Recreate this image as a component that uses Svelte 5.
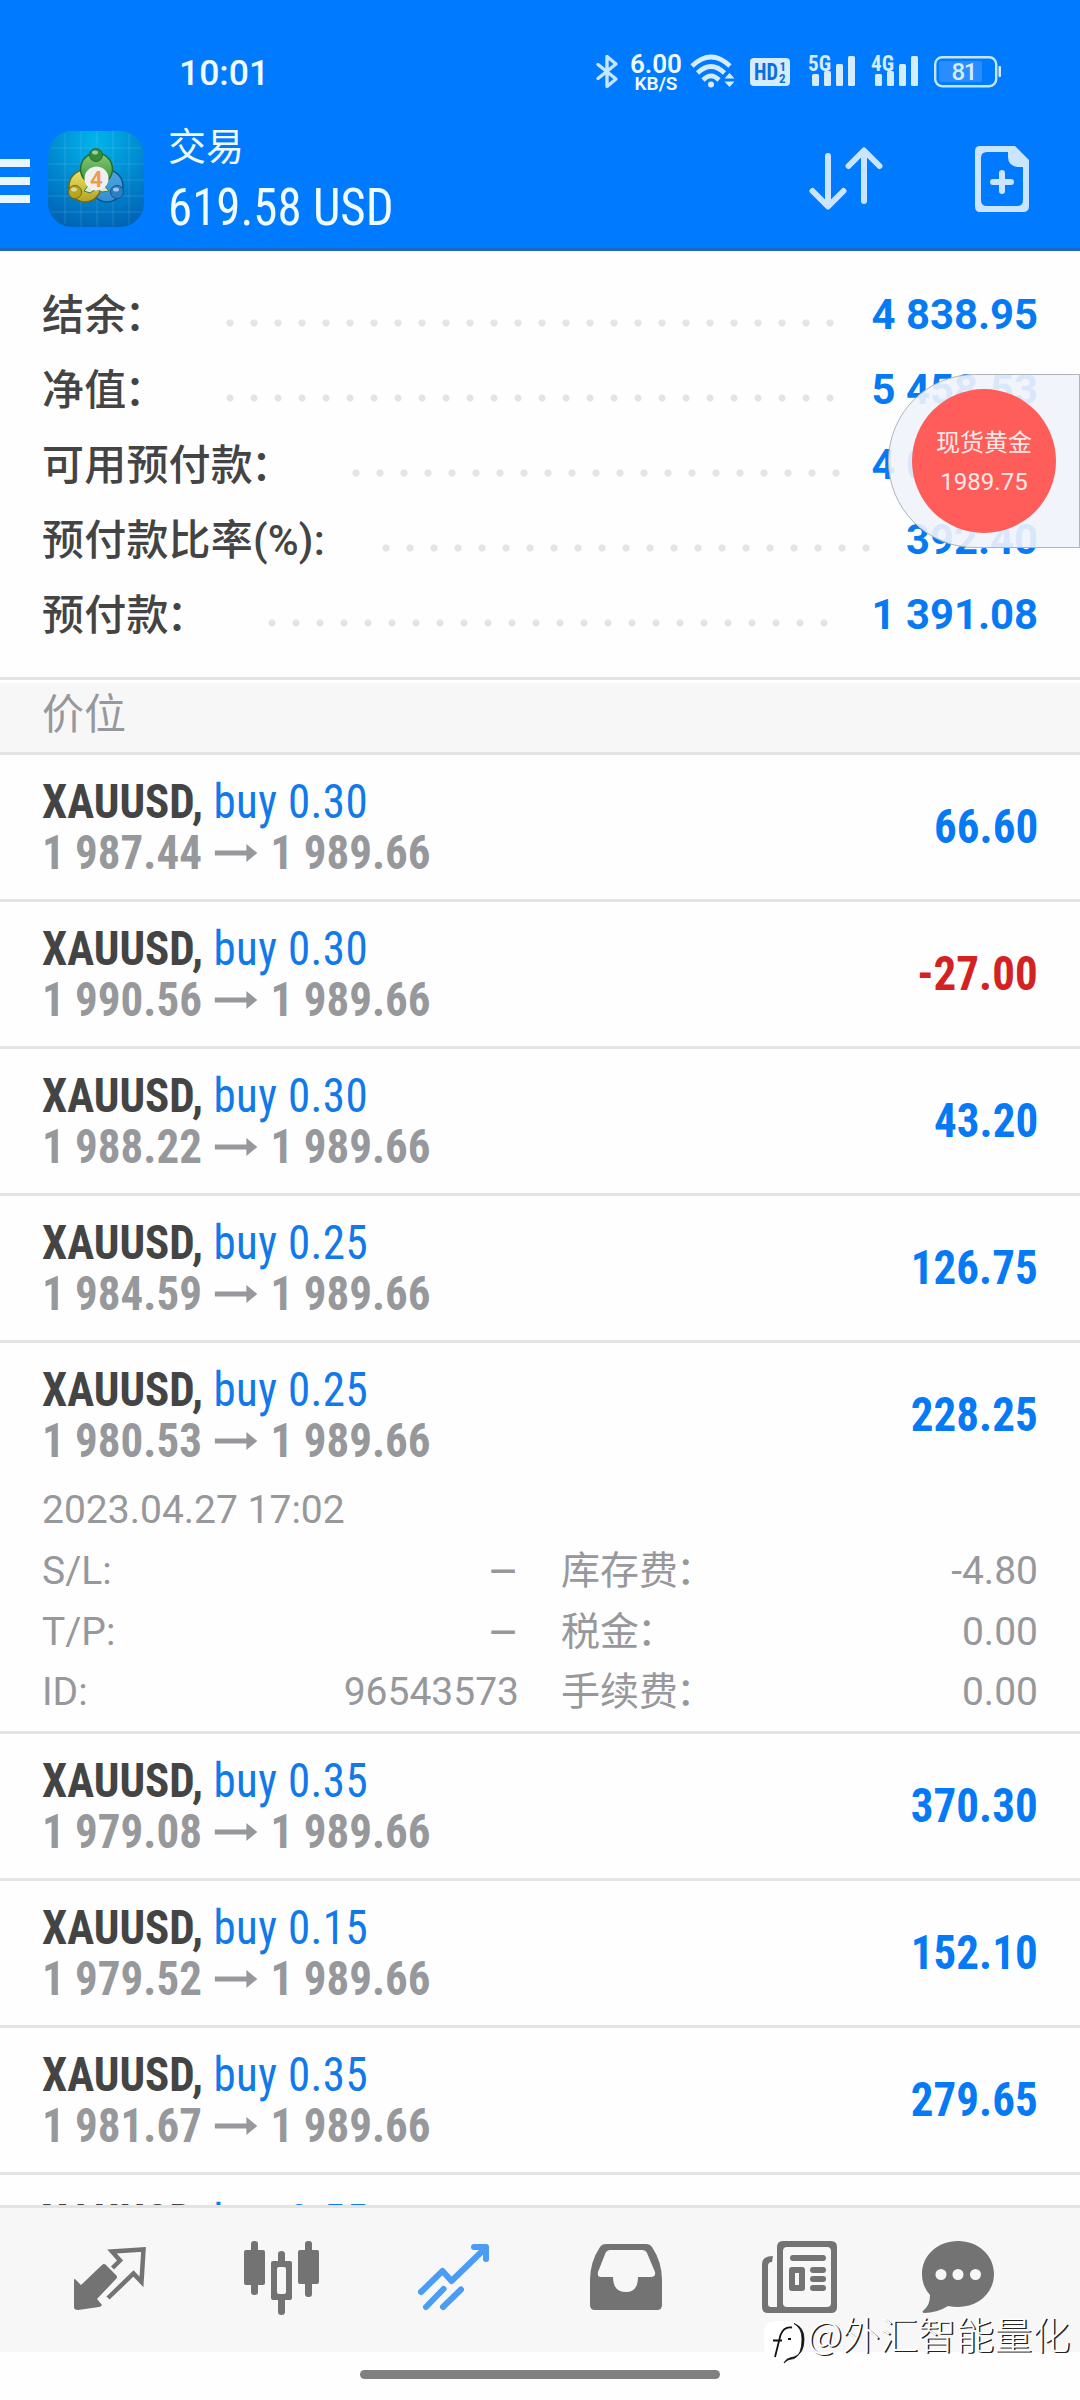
<script lang="ts">
  interface Balance {
    label: string;
    colon: string;
    value: string;
    dots: number;
  }

  interface Position {
    id: number;
    symbol: string;
    volume: string;
    open: string;
    current: string;
    profit: string;
    expanded?: boolean;
  }

  const balances: Balance[] = [
    { label: "结余", colon: "：", value: "4 838.95", dots: 26 },
    { label: "净值", colon: "：", value: "5 458.53", dots: 26 },
    { label: "可用预付款", colon: "：", value: "4 067.45", dots: 21 },
    { label: "预付款比率(%)", colon: ":", value: "392.40", dots: 21 },
    { label: "预付款", colon: "：", value: "1 391.08", dots: 24 },
  ];

  const positions: Position[] = [
    { id: 1, symbol: "XAUUSD", volume: "0.30", open: "1 987.44", current: "1 989.66", profit: "66.60" },
    { id: 2, symbol: "XAUUSD", volume: "0.30", open: "1 990.56", current: "1 989.66", profit: "-27.00" },
    { id: 3, symbol: "XAUUSD", volume: "0.30", open: "1 988.22", current: "1 989.66", profit: "43.20" },
    { id: 4, symbol: "XAUUSD", volume: "0.25", open: "1 984.59", current: "1 989.66", profit: "126.75" },
    { id: 5, symbol: "XAUUSD", volume: "0.25", open: "1 980.53", current: "1 989.66", profit: "228.25", expanded: true },
    { id: 6, symbol: "XAUUSD", volume: "0.35", open: "1 979.08", current: "1 989.66", profit: "370.30" },
    { id: 7, symbol: "XAUUSD", volume: "0.15", open: "1 979.52", current: "1 989.66", profit: "152.10" },
    { id: 8, symbol: "XAUUSD", volume: "0.35", open: "1 981.67", current: "1 989.66", profit: "279.65" },
  ];

  const details = [
    ["S/L:", "–", "库存费", "-4.80"],
    ["T/P:", "–", "税金", "0.00"],
    ["ID:", "96543573", "手续费", "0.00"],
  ];
</script>

{#snippet signal(kind: string)}
  <svg class="signal" width="48" height="36" viewBox="0 0 48 36">
    <text x="0" y="17.500" font-size="22" font-weight="700" textLength="23" lengthAdjust="spacingAndGlyphs">{kind}</text>
    <rect x="4" y="21" width="7" height="12" rx="1.5" />
    <rect x="16" y="18" width="7" height="15" rx="1.5" />
    <rect x="28" y="11" width="7" height="22" rx="1.5" />
    <rect x="40" y="3" width="7" height="30" rx="1.5" />
  </svg>
{/snippet}

<div class="screen">
  <header>
    <div class="status">
      <span class="clock">10:01</span>
      <svg class="bt" width="24" height="36" viewBox="0 0 24 36">
        <path d="M3 11.500L21 26L12 33.500V3.500L21 11L3 25.500" />
      </svg>
      <div class="speed">
        <b>6.00</b>
        <span>KB/S</span>
      </div>
      <svg class="wifi" width="46" height="36" viewBox="0 0 46 36">
        <g fill="none" stroke="#d5ecff" stroke-width="4.6">
          <path d="M2 13 Q21 -5 40 13" />
          <path d="M7.500 20 Q21 7 34.500 20" />
          <path d="M13 27 Q21 19 29 27" />
        </g>
        <circle cx="21" cy="31.500" r="3" />
        <path d="M34.500 25.500 L39.500 20 L44.500 25.500 Z M34.500 28.500 L39.500 34 L44.500 28.500 Z" />
      </svg>
      <svg class="hd" width="40" height="28" viewBox="0 0 40 28">
        <rect width="40" height="28" rx="4" />
        <g fill="#0a6fe0" font-weight="700">
          <text x="4" y="22" font-size="23" textLength="24" lengthAdjust="spacingAndGlyphs">HD</text>
          <text x="29.500" y="12.500" font-size="13">1</text>
          <text x="29" y="25" font-size="13">2</text>
        </g>
      </svg>
      {@render signal("5G")}
      {@render signal("4G")}
      <svg class="battery" width="68" height="32" viewBox="0 0 68 32">
        <rect x="1.200" y="1.200" width="61" height="29" rx="7" fill="none" stroke="#c4e6ff" stroke-width="2.400" />
        <rect x="5" y="5" width="43" height="21" rx="2" fill="#2a8dff" />
        <rect x="64.500" y="10" width="2.500" height="11" rx="1" />
        <text x="17.500" y="24" font-size="24" font-weight="500" textLength="26">81</text>
      </svg>
    </div>
    <div class="toolbar">
      <div class="burger"><i></i><i></i><i></i></div>
      <svg class="logo" width="96" height="96" viewBox="0 0 96 96">
        <defs>
          <radialGradient id="bg" cx="0.5" cy="0.1" r="0.95">
            <stop offset="0" stop-color="#00b4ea" />
            <stop offset="0.55" stop-color="#0087cf" />
            <stop offset="1" stop-color="#0062b4" />
          </radialGradient>
          <linearGradient id="green" x2="0" y2="1">
            <stop offset="0" stop-color="#8ccb72" />
            <stop offset="1" stop-color="#2f8a38" />
          </linearGradient>
          <linearGradient id="yellow" x2="0" y2="1">
            <stop offset="0" stop-color="#ece66a" />
            <stop offset="1" stop-color="#b5a120" />
          </linearGradient>
          <linearGradient id="blue" x2="0" y2="1">
            <stop offset="0" stop-color="#4fa6dd" />
            <stop offset="1" stop-color="#2f8fd6" />
          </linearGradient>
        </defs>
        <rect width="96" height="96" rx="24" fill="url(#bg)" />
        <path class="grid" d="M17 3V93M33 0V96M49 0V96M65 0V96M81 3V93M3 17H93M0 33H96M0 49H96M0 65H96M3 81H93" />
        <circle cx="59" cy="55" r="16" fill="url(#blue)" stroke="#125190" stroke-width="1.500" />
        <circle cx="37" cy="55" r="16" fill="url(#yellow)" stroke="#75680f" stroke-width="1.500" />
        <circle cx="48.500" cy="38" r="16" fill="url(#green)" stroke="#1c6e35" stroke-width="1.500" />
        <path d="M36 60L42 52L54 52L61 60L54 61L48 58L42 62Z" fill="#d9ecc8" stroke="#3d7a4a" />
        <circle cx="48" cy="24" r="6.500" fill="#358c3a" stroke="#1c6e35" />
        <circle cx="27" cy="61" r="6.500" fill="#b9a51f" stroke="#75680f" />
        <circle cx="69" cy="61" r="6.500" fill="#2a7fc4" stroke="#125190" />
        <g fill="#fff" fill-opacity="0.55">
          <ellipse cx="47" cy="21.500" rx="3" ry="2" />
          <ellipse cx="26" cy="58.500" rx="3" ry="2" />
          <ellipse cx="68" cy="58.500" rx="3" ry="2" />
        </g>
        <circle cx="48.500" cy="47.500" r="12" fill="#f1f0f0" />
        <text x="42" y="55.500" font-size="22" font-weight="700" fill="#f19a4e">4</text>
      </svg>
      <div class="title">
        <div class="name">交易</div>
        <div class="total">619.58 USD</div>
      </div>
      <svg class="sort" width="74" height="66" viewBox="0 0 74 66">
        <path d="M19 10V60M3.500 45L19 60.500L34.500 45M55 55V5M39.500 20L55 4.500L70.500 20" />
      </svg>
      <svg class="new" width="56" height="68" viewBox="0 0 56 68">
        <path d="M6 1H41L55 15V61Q55 67 49 67H6Q1 67 1 61V6Q1 1 6 1ZM13 7Q7 7 7 13V55Q7 61 13 61H43Q49 61 49 55V22H43Q34 20 34 12V7Z" />
        <path d="M28 28V46M19 37H37" fill="none" stroke="#cbe4ff" stroke-width="6" stroke-linecap="round" />
      </svg>
    </div>
  </header>

  <section class="balances">
    {#each balances as row (row.label)}
      <div class="balance">
        <span class="label">{row.label}<span class:colon={row.colon === "："}>{row.colon}</span></span>
        <span class="dots" style="width: {row.dots * 24}px"></span>
        <span class="value">{row.value}</span>
      </div>
    {/each}
  </section>

  <div class="section-title">价位</div>

  {#snippet deal(symbol: string, volume: string)}
    <div><b>{symbol},</b> <span class="side">buy {volume}</span></div>
  {/snippet}

  <main>
    {#each positions as p (p.id)}
      <article>
        <div class="summary">
          <div class="deal">
            {@render deal(p.symbol, p.volume)}
            <div class="prices">
              <span>{p.open}</span>
              <svg width="46" height="18" viewBox="0 0 43 18" preserveAspectRatio="none">
                <path d="M0 6.500H32V0L43 9L32 18V11.500H0Z" />
              </svg>
              <span>{p.current}</span>
            </div>
          </div>
          <div class="profit" class:loss={p.profit.startsWith("-")}>{p.profit}</div>
        </div>
        {#if p.expanded}
          <div class="details">
            <div>2023.04.27 17:02</div>
            {#each details as [k1, v1, k2, v2]}
              <div class="line">
                <span>{k1}</span>
                <span class="num" class:dash={v1 === "–"}>{v1}</span>
                <span class="fee">{k2}<span class="colon">：</span></span>
                <span class="num">{v2}</span>
              </div>
            {/each}
          </div>
        {/if}
      </article>
    {/each}
    <article>
      <div class="summary">
        <div class="deal">{@render deal("XAUUSD", "0.55")}<div>&nbsp;</div></div>
      </div>
    </article>
  </main>

  <nav>
    <svg width="76" height="76" viewBox="0 0 76 76">
      <path d="M0 35.500Q0 33 2 35L7 40L28 20Q30 18 32 20L42 30Q44 32 42 34L23 54L28 60Q27 62 25 62L4 65Q0 65 0 62Z" transform="translate(0 5)" />
      <path d="M38.500 28L46 20.500L38 11.500L69.500 9.500L67.500 42L59.500 33.500L34 58" fill="none" stroke="#737373" stroke-width="4.500" />
    </svg>
    <svg width="76" height="76" viewBox="0 0 76 76">
      <rect x="0" y="10" width="21" height="35" rx="2" />
      <rect x="7" y="1" width="7" height="54" rx="3" />
      <path d="M29 21H46Q48 21 48 23V58Q48 60 46 60H29Q27 60 27 58V23Q27 21 29 21ZM35 27Q33 27 33 29V52Q33 54 35 54H40Q42 54 42 52V29Q42 27 40 27Z" />
      <path d="M34 22V14Q34 11 37.500 11Q41 11 41 14V22ZM34 59H41V72Q41 75 37.500 75Q34 75 34 72Z" />
      <rect x="54" y="10" width="21" height="34" rx="2" />
      <rect x="61" y="1" width="7" height="56" rx="3" />
    </svg>
    <svg class="active" width="76" height="76" viewBox="0 0 76 76">
      <path d="M3 52L24.500 31L33.500 41L68 7.500M56 7H68V19" />
      <path d="M8 67L25.500 49M25 67L43 49.500" />
    </svg>
    <svg width="76" height="76" viewBox="0 0 76 76">
      <path d="M16 4H56Q60 4 62 7Q72 22 72 40V65Q72 70 67 70H5Q0 70 0 65V40Q0 22 10 7Q12 4 16 4ZM20 10Q17 10 15.500 13L8 32Q7 37 11 37H23Q23 52 36 52Q48 52 48 37H61Q66 37 65 32L57 13Q55.500 10 52 10Z" />
    </svg>
    <svg width="76" height="76" viewBox="0 0 76 76">
      <path d="M21 1H69Q75 1 75 7V67Q75 73 69 73H6Q0 73 0 67V24Q0 16 11 16L10 22Q6 22 6 26V64Q6 67 9 67H15V7Q15 1 21 1ZM25 7Q21 7 21 11V63Q21 67 25 67H65Q69 67 69 63V11Q69 7 65 7Z" />
      <rect x="28" y="15" width="36" height="6" rx="3" />
      <path d="M30 27H40Q43 27 43 30V48Q43 51 40 51H30Q27 51 27 48V30Q27 27 30 27ZM33 33V45H37V33Z" />
      <rect x="48" y="27" width="16" height="6" rx="3" />
      <rect x="48" y="36" width="16" height="6" rx="3" />
      <rect x="48" y="45" width="16" height="6" rx="3" />
    </svg>
    <svg width="76" height="76" viewBox="0 0 76 76">
      <path d="M36 1C56 1 72 15 72 34C72 53 56 67 36 67Q31 67 26 66Q15 73 2 73Q-1 72 2 70Q8 65 8 55Q0 46 0 34C0 15 16 1 36 1Z" />
      <g fill="#f7f7f7">
        <circle cx="19" cy="34.500" r="5.500" />
        <circle cx="36" cy="34.500" r="5.500" />
        <circle cx="53.500" cy="34.500" r="5.500" />
      </g>
    </svg>
  </nav>
  <div class="home"><i></i></div>

  <div class="quote">
    <div class="bubble">
      <span>现货黄金</span>
      <span>1989.75</span>
    </div>
  </div>

  <div class="watermark">
    <svg width="42" height="46" viewBox="0 0 42 46">
      <path d="M12 0H28Q39 0 39 13V22Q39 33 30 36Q24 37 20 41L19 36H12Q0 36 0 26V13Q0 0 12 0Z" fill="#fff" />
      <path d="M28 6.500Q20 5 16.500 14L11 36M9 19.500H18M24 18H27" fill="none" stroke="#111" stroke-width="1.800" />
      <path d="M30 2.500Q40 6 40 18Q40 33 30 36Q22 37 20 42Q23 38 30 37.500Q38 34 38 18Q38 7 30 2.500Z" fill="#111" stroke="#111" stroke-width="0.800" />
    </svg>
    <span>@外汇智能量化</span>
  </div>
</div>

<style>
  :global(body) {
    margin: 0;
    background: #fff;
  }
  .screen {
    position: relative;
    display: flex;
    flex-direction: column;
    width: 1080px;
    height: 2400px;
    overflow: hidden;
    background: #fefefe;
    color: #444;
    font-family: Roboto, "Noto Sans CJK SC", sans-serif;
  }

  header {
    box-sizing: border-box;
    height: 251px;
    flex-shrink: 0;
    background: #007aff;
    border-bottom: 3px solid #1a68c0;
    color: #f0fbff;
  }
  .status {
    display: flex;
    align-items: flex-start;
    height: 104px;
    padding: 53px 0 0 179px;
    box-sizing: border-box;
  }
  .status svg {
    fill: #d5ecff;
    flex-shrink: 0;
    overflow: visible;
  }
  .signal text,
  .hd text {
    font-stretch: 75%;
  }
  .clock {
    width: 416px;
    font-size: 35.5px;
    font-weight: 500;
    line-height: 40px;
  }
  .bt path {
    fill: none;
    stroke: #c4e6ff;
    stroke-width: 3.4;
    stroke-linejoin: round;
    stroke-linecap: round;
  }
  .speed {
    display: flex;
    flex-direction: column;
    align-items: center;
    width: 58px;
    margin-left: 8px;
    font-weight: 600;
    font-size: 19px;
    line-height: 17px;
  }
  .speed b {
    font-size: 26px;
    font-weight: 600;
    line-height: 22px;
  }
  .wifi {
    margin-left: 5px;
  }
  .status .hd {
    margin: 5px 18px 0 14px;
  }
  .signal {
    margin-right: 15px;
  }
  .battery {
    margin-top: 3px;
  }

  .toolbar {
    display: flex;
    align-items: flex-start;
    padding-top: 22px;
  }
  .burger {
    display: flex;
    flex-direction: column;
    gap: 10px;
    margin: 33px 18px 0 0;
  }
  .burger i {
    width: 30px;
    height: 8px;
    background: #e9f5ff;
  }
  .logo {
    margin-top: 5px;
  }
  .grid {
    stroke: #fff;
    stroke-opacity: 0.13;
  }
  .title {
    width: 641px;
    margin-left: 24px;
  }
  .name {
    padding-top: 1px;
    font-size: 38px;
    line-height: 40px;
  }
  .total {
    margin-top: 11px;
    font-size: 51.5px;
    font-stretch: 75%;
    line-height: 60px;
    transform: scaleX(0.95);
    transform-origin: left;
  }
  .sort {
    margin-top: 20px;
    fill: none;
    stroke: #cbe4ff;
    stroke-width: 6;
    stroke-linecap: round;
    stroke-linejoin: round;
  }
  .new {
    margin: 19px 0 0 91px;
    fill: #cbe4ff;
    fill-rule: evenodd;
  }

  .balances {
    height: 400px;
    padding: 26px 42px 0 42px;
    flex-shrink: 0;
  }
  .balance {
    display: flex;
    align-items: center;
    height: 75px;
    font-size: 42px;
    font-weight: 500;
  }
  .label {
    margin-top: -7px;
    letter-spacing: 0.2px;
    white-space: nowrap;
  }
  .colon {
    position: relative;
    left: -2px;
  }
  .dots {
    height: 8px;
    margin: 16px 0 0 49px;
    background: radial-gradient(circle, #e4e4e4 3.2px, transparent 4px) 0 0 / 24px 8px repeat-x;
  }
  .value {
    margin-left: auto;
    color: #067af5;
    font-size: 41.8px;
    font-weight: 700;
  }

  .section-title {
    box-sizing: border-box;
    height: 78px;
    flex-shrink: 0;
    padding-left: 42px;
    border-top: 3px solid #e4e4e4;
    border-bottom: 3px solid #e4e4e4;
    background: #f7f7f7;
    box-shadow: inset 0 3px #fefefe;
    color: #97989c;
    font-size: 42px;
    line-height: 69px;
  }

  main {
    flex: 1;
    min-height: 0;
    overflow: hidden;
  }
  article {
    border-bottom: 3px solid #e4e4e4;
  }
  .summary {
    display: flex;
    justify-content: space-between;
    align-items: center;
    height: 144px;
    padding: 0 42px;
  }
  /* the list face is narrower than the condensed cut */
  .deal,
  .profit {
    font-size: 48.5px;
    font-stretch: 75%;
    line-height: 51px;
    white-space: nowrap;
    transform: scaleX(0.928);
  }
  .deal {
    transform-origin: left;
  }
  .side {
    color: #1279ea;
    letter-spacing: 0.4px;
  }
  .prices {
    display: flex;
    align-items: center;
    gap: 14px;
    color: #97989c;
    font-weight: 700;
  }
  .prices svg {
    fill: #97989c;
  }
  .profit {
    margin-top: -1px;
    transform-origin: right;
    color: #067af5;
    font-weight: 700;
  }
  .loss {
    color: #d42222;
  }
  .details {
    display: flow-root;
    height: 251px;
    margin-top: -7px;
    padding: 0 42px;
    color: #97989c;
    font-size: 39px;
    line-height: 61px;
  }
  .line {
    display: grid;
    grid-template-columns: 200px 277px 242px 1fr;
    height: 60.7px;
  }
  .fee {
    padding-left: 42px;
    white-space: nowrap;
  }
  .num {
    text-align: right;
  }
  .dash {
    font-size: 48px;
  }

  nav {
    box-sizing: border-box;
    display: grid;
    grid-template-columns: 170px 174px 172px 172px 160px 76px;
    height: 147px;
    flex-shrink: 0;
    padding: 32px 0 0 74px;
    border-top: 3px solid #e4e4e4;
    background: #f7f7f7;
  }
  nav svg {
    fill: #737373;
    fill-rule: evenodd;
    overflow: visible;
  }
  nav .active {
    fill: none;
    stroke: #4a9cf5;
    stroke-width: 6;
    stroke-linecap: round;
    stroke-linejoin: round;
  }
  .home {
    display: flex;
    justify-content: center;
    height: 30px;
    padding-top: 18px;
    flex-shrink: 0;
  }
  .home i {
    width: 360px;
    height: 9px;
    border-radius: 5px;
    background: #808080;
  }

  .quote {
    position: absolute;
    top: 374px;
    right: 0;
    box-sizing: border-box;
    width: 192px;
    height: 174px;
    padding: 14px 0 0 23px;
    border: 1px solid #b0b4ba;
    border-radius: 87px 0 0 87px;
    background: rgba(240, 243, 250, 0.9);
  }
  .bubble {
    box-sizing: border-box;
    display: flex;
    flex-direction: column;
    align-items: center;
    justify-content: center;
    gap: 3px;
    width: 144px;
    height: 144px;
    padding-top: 2px;
    border-radius: 50%;
    background: #ff5d59;
    color: #ffe9e8;
    font-size: 24px;
    line-height: 36px;
  }

  .watermark {
    position: absolute;
    right: 10px;
    top: 2310px;
    display: flex;
    align-items: flex-start;
    color: #fff;
    font-family: "Noto Sans CJK SC", sans-serif;
    font-size: 38px;
    font-weight: 300;
    line-height: 46px;
    text-shadow: 1.5px 1px 0 #222;
    white-space: nowrap;
  }
  .watermark svg {
    margin: 11px 1px 0 0;
  }
</style>
